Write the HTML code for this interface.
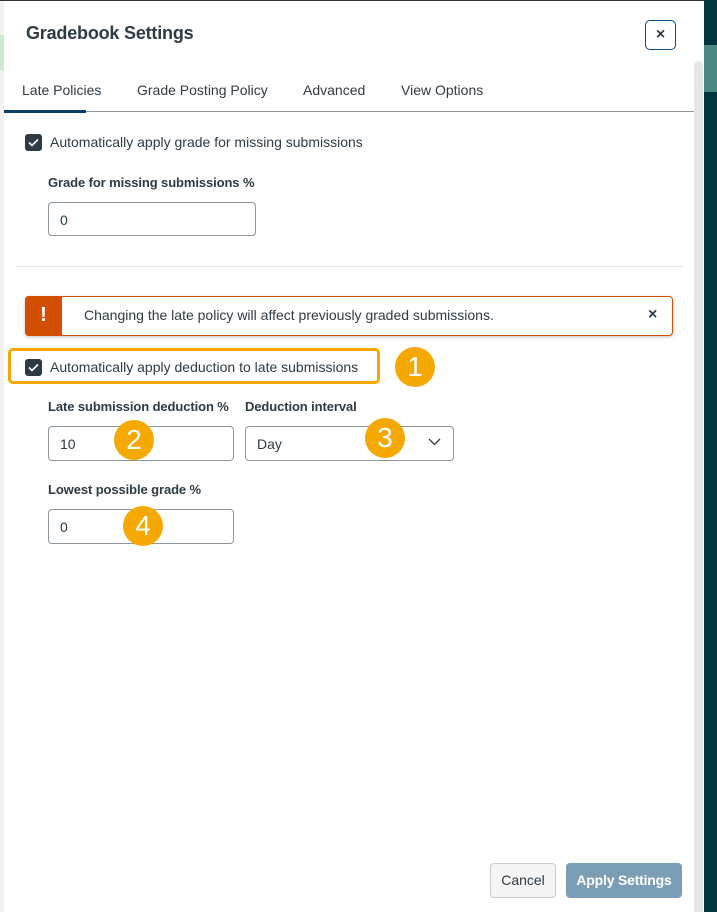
<!DOCTYPE html>
<html><head><meta charset="utf-8"><style>
*{box-sizing:border-box;margin:0;padding:0}
body{width:717px;height:912px;overflow:hidden;position:relative;background:#fff;font-family:"Liberation Sans",sans-serif;color:#2d3b45}
.abs{position:absolute}
.lbl{font-weight:bold;font-size:13px;color:#2d3b45;letter-spacing:-0.1px}
.inp{position:absolute;border:1px solid #8b969e;border-radius:4px;height:35px;font-size:14px;padding:9px 0 0 11px;background:#fff}
.cb{position:absolute;width:17px;height:17px;background:#2d3b45;border-radius:3px}
.cb svg{position:absolute;left:3px;top:4px}
.badge{position:absolute;width:40px;height:40px;border-radius:50%;background:#f5a800;color:#fff;font-size:28px;text-align:center;line-height:40px}
</style></head><body>
<div class="abs" style="left:0;top:0;width:4px;height:912px;background:#f2f2f2"></div>
<div class="abs" style="left:0;top:35px;width:4px;height:35px;background:#cfe8d0"></div>
<div class="abs" style="left:704px;top:0;width:13px;height:912px;background:#04353a"></div>
<div class="abs" style="left:704px;top:45px;width:13px;height:47px;background:#4c8784"></div>
<div class="abs" style="left:0;top:0;width:704px;height:1px;background:#333"></div>
<div class="abs" style="left:694px;top:61px;width:9px;height:851px;background:#e6e6e6;border-radius:5px 5px 0 0"></div>

<div class="abs" style="left:26px;top:23px;font-size:18px;font-weight:bold;color:#2d3b45;letter-spacing:-0.2px">Gradebook Settings</div>
<div class="abs" style="left:645px;top:20px;width:31px;height:30px;border:1px solid #0e4b7c;border-radius:5px;text-align:center;font-size:16px;line-height:27px;font-weight:bold;color:#2d3b45">×</div>

<div class="abs" style="left:22px;top:82px;font-size:14px">Late Policies</div>
<div class="abs" style="left:137px;top:82px;font-size:14px">Grade Posting Policy</div>
<div class="abs" style="left:303px;top:82px;font-size:14px">Advanced</div>
<div class="abs" style="left:401px;top:82px;font-size:14px">View Options</div>
<div class="abs" style="left:4px;top:111px;width:690px;height:1px;background:#8b969e"></div>
<div class="abs" style="left:4px;top:110px;width:82px;height:3px;background:#0e3e63"></div>

<div class="cb" style="left:25px;top:134px"><svg width="11" height="9" viewBox="0 0 11 9"><path d="M1 4.5L4 7.5L10 1.5" stroke="#fff" stroke-width="1.6" fill="none"/></svg></div>
<div class="abs" style="left:50px;top:134px;font-size:14px">Automatically apply grade for missing submissions</div>
<div class="abs lbl" style="left:48px;top:175px">Grade for missing submissions %</div>
<div class="inp" style="left:48px;top:202px;width:208px;height:34px">0</div>
<div class="abs" style="left:16px;top:266px;width:668px;height:1px;background:#e2e4e6"></div>

<div class="abs" style="left:25px;top:296px;width:648px;height:40px;border:1px solid #d24e00;border-radius:4px;box-shadow:0 1px 3px rgba(0,0,0,.25);background:#fff"></div>
<div class="abs" style="left:25px;top:296px;width:37px;height:40px;background:#d24e00;border-radius:4px 0 0 4px;color:#fff;font-weight:bold;font-size:20px;text-align:center;line-height:38px">!</div>
<div class="abs" style="left:84px;top:307px;font-size:14px">Changing the late policy will affect previously graded submissions.</div>
<div class="abs" style="left:648px;top:306px;font-size:16px;font-weight:bold">×</div>

<div class="abs" style="left:8px;top:348px;width:372px;height:36px;border:3px solid #f5a800;border-radius:5px"></div>
<div class="cb" style="left:25px;top:359px"><svg width="11" height="9" viewBox="0 0 11 9"><path d="M1 4.5L4 7.5L10 1.5" stroke="#fff" stroke-width="1.6" fill="none"/></svg></div>
<div class="abs" style="left:50px;top:359px;font-size:14px">Automatically apply deduction to late submissions</div>
<div class="badge" style="left:395px;top:347px">1</div>

<div class="abs lbl" style="left:48px;top:399px">Late submission deduction %</div>
<div class="abs lbl" style="left:245px;top:399px">Deduction interval</div>
<div class="inp" style="left:48px;top:426px;width:186px">10</div>
<div class="inp" style="left:245px;top:426px;width:209px">Day</div>
<svg class="abs" style="left:428px;top:438px" width="13" height="8" viewBox="0 0 13 8"><path d="M1 1L6.5 6.5L12 1" stroke="#2d3b45" stroke-width="1.3" fill="none"/></svg>
<div class="badge" style="left:114px;top:420px">2</div>
<div class="badge" style="left:365px;top:418px">3</div>

<div class="abs lbl" style="left:48px;top:482px">Lowest possible grade %</div>
<div class="inp" style="left:48px;top:509px;width:186px">0</div>
<div class="badge" style="left:123px;top:506px">4</div>

<div class="abs" style="left:490px;top:863px;width:66px;height:35px;background:#f5f5f5;border:1px solid #c7cdd1;border-radius:4px;font-size:14px;text-align:center;line-height:33px">Cancel</div>
<div class="abs" style="left:566px;top:863px;width:116px;height:35px;background:#7b9db5;border-radius:4px;color:#fff;font-size:14px;font-weight:bold;text-align:center;line-height:35px;letter-spacing:-0.2px">Apply Settings</div>
</body></html>
